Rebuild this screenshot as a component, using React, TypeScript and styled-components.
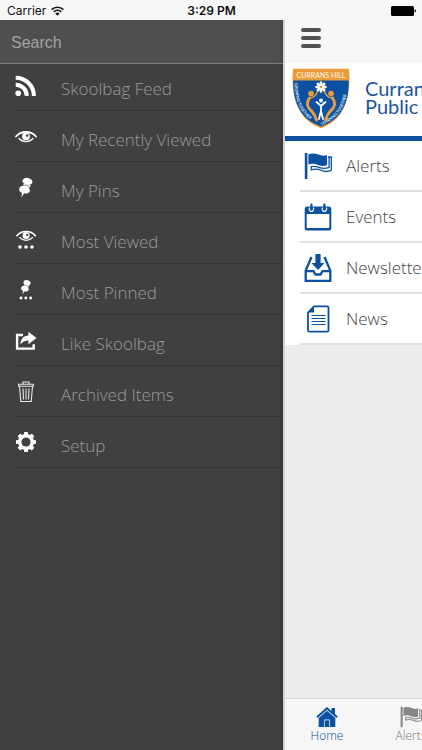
import React from "react";
import styled, { createGlobalStyle } from "styled-components";

const BLUE = "#0c51a1";

const GlobalStyle = createGlobalStyle`
  *, *::before, *::after { box-sizing: border-box; }
  html, body, #root { height: 100%; }
  body {
    margin: 0;
    overflow: hidden;
    background: #f7f7f7;
    font-family: "Open Sans", "Noto Sans", sans-serif;
    font-weight: 300;
  }
`;

const Screen = styled.div`
  display: flex;
  flex-direction: column;
  height: 100vh;
  overflow: hidden;
`;

const StatusBar = styled.header`
  display: grid;
  grid-template-columns: 1fr auto 1fr;
  align-items: center;
  flex: none;
  height: 20px;
  padding: 2px 6px 0 7px;
  background: #f7f7f7;
  color: #111;
  font: 400 12px/16px Inter, "Liberation Sans", sans-serif;
`;

const Carrier = styled.span`
  display: flex;
  align-items: center;
  gap: 5px;
`;

const Clock = styled.time`
  font-size: 12px;
  font-weight: 600;
`;

const Battery = styled.svg`
  justify-self: end;
`;

const Body = styled.div`
  display: flex;
  flex: 1;
  min-height: 0;
`;

const Drawer = styled.aside`
  flex: none;
  width: 283px;
  background: linear-gradient(to left, #383738 0, #414041 5px);
`;

const SearchField = styled.input`
  display: block;
  width: 100%;
  height: 44px;
  padding: 2px 11px 0;
  border: 0;
  border-bottom: 1px solid #7c7c7c;
  border-radius: 0;
  outline: 0;
  background: linear-gradient(to left, #454545 0, #4f4f4f 5px);
  color: #ddd;
  font: 400 16px/20px "Liberation Sans", Arial, sans-serif;
  &::placeholder { color: #a3a3a3; opacity: 1; }
`;

const MenuList = styled.ul`
  margin: 0;
  padding: 0 0 0 15px;
  list-style: none;
`;

const MenuItem = styled.li`
  height: 51px;
  border-bottom: 1px solid #363536;
  &:first-child { height: 47px; }
`;

const MenuLink = styled.a`
  display: flex;
  align-items: flex-end;
  gap: 24px;
  height: 100%;
  padding-bottom: 9px;
  color: #9a9a9a;
  font-size: 17px;
  line-height: 24px;
  text-decoration: none;
`;

const MenuIcon = styled.svg`
  flex: none;
  width: 22px;
  height: 22px;
  margin-bottom: 4px;
  color: #fff;
`;

const Panel = styled.main`
  display: flex;
  flex: 1;
  flex-direction: column;
  min-width: 0;
  overflow: hidden;
  border-left: 2px solid #d2d2d2;
  background: #ededed;
  white-space: nowrap;
`;

const Toolbar = styled.div`
  display: flex;
  align-items: center;
  flex: none;
  height: 43px;
  padding: 0 16px;
  background: #f7f7f7;
`;

const MenuButton = styled.button`
  display: flex;
  flex-direction: column;
  gap: 4px;
  margin: 0;
  padding: 0 0 8px;
  border: 0;
  background: none;
`;

const Bar = styled.span`
  width: 20px;
  height: 4px;
  border-radius: 2px;
  background: #525252;
`;

const School = styled.div`
  display: flex;
  align-items: flex-start;
  flex: none;
  gap: 14px;
  height: 78px;
  padding: 5px 0 0 6px;
  border-bottom: 5px solid ${BLUE};
  background: #fff;
`;

const Crest = styled.svg`
  flex: none;
`;

const SchoolName = styled.h1`
  margin: 11px 0 0;
  color: #1d559f;
  font: 400 20px/18px Lato, "Open Sans", sans-serif;
`;

const FeedList = styled.ul`
  flex: none;
  margin: 0;
  padding: 0 0 0 15px;
  background: #fff;
  list-style: none;
`;

const FeedItem = styled.li`
  height: 51px;
  border-bottom: 2px solid #e1e1e1;
`;

const FeedLink = styled.a`
  display: flex;
  align-items: center;
  gap: 14px;
  height: 100%;
  padding-left: 4px;
  color: #444;
  font-size: 17px;
  line-height: 24px;
  text-decoration: none;
`;

const FeedIcon = styled.svg`
  flex: none;
  width: 28px;
  height: 28px;
  color: ${BLUE};
`;

const TabBar = styled.nav`
  display: flex;
  flex: none;
  height: 52px;
  margin-top: auto;
  border-top: 1px solid #d6d6d6;
  background: #f6f6f6;
`;

const Tab = styled.a<{ $active?: boolean }>`
  display: flex;
  flex: none;
  flex-direction: column;
  align-items: center;
  width: 84px;
  padding-top: 7px;
  color: ${(p) => (p.$active ? "#0c51a1" : "#777")};
  font-size: 12px;
  font-weight: 300;
  line-height: 16px;
  text-decoration: none;
`;

const TabIcon = styled.svg<{ $active?: boolean }>`
  width: 22px;
  height: 22px;
  color: ${(p) => (p.$active ? BLUE : "#858585")};
`;

const Eye = () => (
  <>
    <path d="M1 10.5C6 4.5 16 4.5 21 10.5" fill="none" stroke="currentColor" strokeWidth="1.8" strokeLinecap="round" />
    <path d="M4 12.500C8 16.600 14 16.600 18 12.500" fill="none" stroke="currentColor" strokeWidth="1.200" strokeLinecap="round" />
    <circle cx="11" cy="10.3" r="3.9" fill="currentColor" />
    <circle cx="12.2" cy="9.6" r="1.3" fill="#414041" />
  </>
);

const Dots = () => (
  <>
    <circle cx="5" cy="20" r="1.8" fill="currentColor" />
    <circle cx="11" cy="20" r="1.8" fill="currentColor" />
    <circle cx="17" cy="20" r="1.8" fill="currentColor" />
  </>
);

const Pin = () => (
  <g fill="currentColor">
    <ellipse cx="12.5" cy="4.4" rx="5" ry="3.5" transform="rotate(12 12.5 4.4)" />
    <path d="M8.5 6.5 16 8.5 14.2 11 8 9.5Z" />
    <path d="M4.2 12.2C4.6 8.7 8 8 11 9.2c3 1.2 4.6 3.3 3.6 5.6-.9 1.8-3.6 2-5.4 1.5L6.4 20.6l.5-4.8C5 15 4 13.8 4.2 12.2Z" />
    <path d="M8 8.3c2.3-.5 4.6 0 6.6 1.7" fill="none" stroke="#414041" strokeWidth=".6" />
  </g>
);

const Flag = () => (
  <>
    <path d="M.8 1h2.6v26H.8Z" fill="currentColor" />
    <path d="M4.4 2.3c4-1.5 7-1 10 .3 3 1.2 5.7 1.5 8.6.3v10.4c-3.3 1-6.1.8-9-.4-3.2-1.3-6.1-1.7-9.6-.3Z" fill="currentColor" />
    <path d="M24 5h3.3v13.3c-3.6 1.9-6.8 1.4-10 .1-3.3-1.5-6.2-2-10-.5v-3.3c3-.7 5.3-.1 8.3 1 3.8 1.4 6.3 1 9.5-.2V5.5" fill="none" stroke="currentColor" strokeWidth="1.3" />
  </>
);

const menu: { label: string; art: React.ReactNode }[] = [
  {
    label: "Skoolbag Feed",
    art: (
      <g fill="none" stroke="currentColor" strokeWidth="4">
        <circle cx="3.2" cy="18.2" r="2.8" fill="currentColor" stroke="none" />
        <path d="M.7 9.7a11 11 0 0 1 11 11.2" />
        <path d="M.7 2.700a18.200 18.200 0 0 1 18.200 18.200" />
      </g>
    ),
  },
  { label: "My Recently Viewed", art: <Eye /> },
  { label: "My Pins", art: <Pin /> },
  { label: "Most Viewed", art: <><g transform="translate(1 -2) scale(.92)"><Eye /></g><g transform="translate(0 -1)"><Dots /></g></> },
  { label: "Most Pinned", art: <><g transform="translate(3 .5) scale(.72)"><Pin /></g><g transform="translate(2 3) scale(.8)"><Dots /></g></> },
  {
    label: "Like Skoolbag",
    art: (
      <>
        <path d="M8 5H2.1v13.6h16.6v-4.3" fill="none" stroke="currentColor" strokeWidth="2.4" />
        <path d="M13.4 1.8 21.5 8l-8.1 6.3v-3.7c-3.6 0-5.5 1-8 4 .1-5.4 3-8.600 8-9Z" fill="currentColor" />
      </>
    ),
  },
  {
    label: "Archived Items",
    art: (
      <g fill="none" stroke="#e6e6e6" strokeWidth="1.1">
        <path d="M3.6 3.3h14.8v2H3.6ZM8 3V1h6v2M4.5 5.500l1.300 15h10.400l1.300-15M8 7.500l.5 11M11 7.500v11M14 7.500l-.5 11" />
      </g>
    ),
  },
  {
    label: "Setup",
    art: (
      <g fill="currentColor" transform="translate(11 10)">
        {[0, 45, 90, 135].map((angle) => (
          <rect key={angle} x="-2" y="-10" width="4" height="20" rx=".8" transform={`rotate(${angle})`} />
        ))}
        <circle r="8" />
        <circle r="4.600" fill="#414041" />
      </g>
    ),
  },
];

const feeds: { label: string; art: React.ReactNode }[] = [
  { label: "Alerts", art: <Flag /> },
  {
    label: "Events",
    art: (
      <>
        <path fillRule="evenodd" fill="currentColor" d="M3.2 3.5h21.6a2.5 2.5 0 0 1 2.5 2.5v19a2.5 2.5 0 0 1-2.5 2.5H3.2A2.5 2.5 0 0 1 .7 25V6a2.5 2.5 0 0 1 2.500-2.500ZM2.700 11v12.800c0 .8.4 1.200 1.200 1.200h20.200c.8 0 1.200-.4 1.200-1.200V11Z" />
        <g fill="none" stroke="#fff" strokeWidth="1.2">
          <path d="M5.5 4.7a2.3 2.3 0 1 0 3.8 0M18.5 4.7a2.3 2.3 0 1 0 3.8 0" />
        </g>
        <path d="M7.4 1.5v4.4M20.4 1.5v4.4" stroke="currentColor" strokeWidth="2.2" strokeLinecap="round" />
      </>
    ),
  },
  {
    label: "Newsletters",
    art: (
      <g fill="none" stroke="currentColor" strokeWidth="2.3">
        <path d="M7.5 3 1.7 16.5v10.3h24.6V16.5L20.5 3" />
        <path d="M1.7 17.2h7.8l2 3.3h5l2-3.3h7.8" />
        <path d="M11.4 0h5.200v9h4L14 16 7.400 9h4Z" fill="currentColor" stroke="none" />
      </g>
    ),
  },
  {
    label: "News",
    art: (
      <>
        <path d="M10 1.3h13a1.5 1.5 0 0 1 1.5 1.5v22.4a1.5 1.5 0 0 1-1.5 1.5H5.5A1.5 1.5 0 0 1 4 25.2V7.5Z" fill="none" stroke="currentColor" strokeWidth="1.8" />
        <path d="M10 1.3v6.2H4Z" fill="currentColor" />
        <path d="M7.5 10.5h14M7.500 13.500h14M7.500 16.500h14M7.500 19.500h14" stroke="currentColor" strokeWidth="1" />
      </>
    ),
  },
];

const SchoolCrest = () => (
  <Crest width="60" height="61" viewBox="0 0 60 61" role="img" aria-label="Currans Hill crest">
    <defs>
      <path id="mottoLeft" d="M2.6 15C3 38 12 51 29 58" />
      <path id="mottoRight" d="M31 58C48 51 57 38 57.4 15" />
    </defs>
    <path d="M2 .8h56c2.6 28-4.7 51-28 59.5C6.700 51.800-.6 28.800 2 .8Z" fill="#eb9d3b" />
    <path d="M2.300 12.500h55.400C58 36 49.500 52 30 58.400 10.500 52 2 36 2.300 12.500Z" fill={BLUE} />
    <text x="30" y="9.500" textAnchor="middle" fontFamily="Lato, sans-serif" fontSize="7" fontWeight="400" fill="#fff8ec">CURRANS HILL</text>
    <g fontFamily="Lato, sans-serif" fontSize="4" fontWeight="700" fill="#dce9f7">
      <text dy="-1"><textPath href="#mottoLeft">GROWING TOGETHER</textPath></text>
      <text dy="-1"><textPath href="#mottoRight">LEARNING TOGETHER</textPath></text>
    </g>
    <g fill="none" stroke="#eb9d3b" strokeLinecap="round">
      <path d="M18.500 30c-3.500 5-2 10 2 13 3 3 4 5 5 9" strokeWidth="3" />
      <path d="M41.500 30c3.500 5 2 10-2 13-3 3-4 5-5 9" strokeWidth="3" />
      <path d="M18.500 30c5 0 7-4 9-8M41.500 30c-5 0-7-4-9-8" strokeWidth="1.500" />
    </g>
    <circle cx="20" cy="25.500" r="2.800" fill="#eb9d3b" />
    <circle cx="40" cy="25.500" r="2.800" fill="#eb9d3b" />
    <g stroke="#fff" strokeLinecap="round" fill="none">
      <path d="M25.500 34l4.500 4 4.500-4M30 38v6M30 43l-2 8M30 43l2 8" strokeWidth="1.800" />
      <g strokeWidth="2.600">
        <path d="M30 14.500v9M25.500 19h9M26.800 15.800l6.400 6.400M33.200 15.800l-6.400 6.400" />
      </g>
    </g>
    <circle cx="30" cy="32.500" r="2" fill="#fff" />
    <circle cx="30" cy="19" r="1.300" fill="#eb9d3b" />
  </Crest>
);

export default function App() {
  return (
    <Screen>
      <GlobalStyle />
      <StatusBar>
        <Carrier>
          Carrier
          <svg width="13" height="10" viewBox="0 0 13 10" aria-label="Wi-Fi">
            <g fill="none" stroke="#111" strokeWidth="1.500">
              <path d="M.6 3.600a8.400 8.400 0 0 1 11.800 0M2.700 5.900a5.400 5.400 0 0 1 7.600 0" />
            </g>
            <path d="M4.300 7.500a3.100 3.100 0 0 1 4.400 0L6.500 9.800Z" fill="#111" />
          </svg>
        </Carrier>
        <Clock>3:29 PM</Clock>
        <Battery width="25" height="10" viewBox="0 0 25 10" aria-label="Battery full">
          <rect width="23" height="10" rx="1.500" fill="#000" />
          <path d="M23.700 3.300q1.300.3 1.300 1.700t-1.300 1.700Z" fill="#000" />
        </Battery>
      </StatusBar>
      <Body>
        <Drawer>
          <SearchField type="search" placeholder="Search" aria-label="Search" />
          <nav aria-label="Skoolbag">
            <MenuList>
              {menu.map((item) => (
                <MenuItem key={item.label}>
                  <MenuLink href="#">
                    <MenuIcon viewBox="0 0 22 22" aria-hidden="true">{item.art}</MenuIcon>
                    {item.label}
                  </MenuLink>
                </MenuItem>
              ))}
            </MenuList>
          </nav>
        </Drawer>
        <Panel>
          <Toolbar>
            <MenuButton type="button" aria-label="Toggle menu">
              <Bar />
              <Bar />
              <Bar />
            </MenuButton>
          </Toolbar>
          <School>
            <SchoolCrest />
            <SchoolName>
              Currans Hill
              <br />
              Public School
            </SchoolName>
          </School>
          <FeedList>
            {feeds.map((item) => (
              <FeedItem key={item.label}>
                <FeedLink href="#">
                  <FeedIcon viewBox="0 0 28 28" aria-hidden="true">{item.art}</FeedIcon>
                  {item.label}
                </FeedLink>
              </FeedItem>
            ))}
          </FeedList>
          <TabBar>
            <Tab href="#" $active>
              <TabIcon $active viewBox="0 0 22 22" aria-hidden="true">
                <path d="M11 1 15.500 5V2h3.500v6l2.700 2.600-1.300 1.500L11 3.700 1.600 12.100.3 10.600Z" fill="currentColor" />
                <path d="M11 4.700 19.300 12V21h-5.600v-7.500H8.300V21H2.700v-9Z" fill="currentColor" />
                <path d="M9 14.300h4V21H9Z" fill="currentColor" />
              </TabIcon>
              Home
            </Tab>
            <Tab href="#">
              <TabIcon viewBox="0 0 28 28" aria-hidden="true"><Flag /></TabIcon>
              Alerts
            </Tab>
          </TabBar>
        </Panel>
      </Body>
    </Screen>
  );
}
